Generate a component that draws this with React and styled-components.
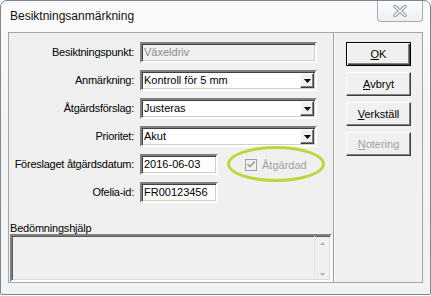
import React from "react";
import styled, { createGlobalStyle } from "styled-components";

const Global = createGlobalStyle`
  html, body {
    margin: 0;
    padding: 0;
    background: #ffffff;
  }
  body {
    font-family: "Liberation Sans", Arial, sans-serif;
    font-size: 11px;
    color: #000;
  }
`;

const Window = styled.div`
  box-sizing: border-box;
  width: 431px;
  height: 295px;
  border: 1px solid #7d8793;
  border-radius: 7px 7px 2px 2px;
  background: linear-gradient(#fbfbfb, #f3f4f5 40%, #f1f2f3);
  padding: 0 7px 0 7px;
  display: flex;
  flex-direction: column;
`;

const TitleBar = styled.div`
  height: 31px;
  display: flex;
  align-items: flex-start;
`;

const Title = styled.span`
  font-family: "Liberation Sans", Arial, sans-serif;
  font-size: 12px;
  line-height: 31px;
  padding-left: 2px;
  color: #111;
`;

const CloseButton = styled.div`
  margin-left: auto;
  box-sizing: border-box;
  width: 46px;
  height: 21px;
  border: 1px solid #a3acb6;
  border-top: none;
  border-radius: 0 0 4px 4px;
  background: linear-gradient(#fdfdfd, #eceef0);
  display: flex;
  align-items: center;
  justify-content: center;
`;

const Client = styled.div`
  box-sizing: border-box;
  height: 251px;
  display: flex;
  border: 1px solid #a6a6a6;
  background: #f0f0f0;
`;

const LeftPanel = styled.div`
  box-sizing: border-box;
  width: 325px;
  border-right: 1px solid #a0a0a0;
  box-shadow: 1px 0 0 #ffffff;
  display: flex;
  flex-direction: column;
  padding: 9px 0 0 1px;
`;

const Form = styled.div`
  display: grid;
  grid-template-columns: 124px 1fr;
  grid-auto-rows: 21px;
  column-gap: 6px;
  row-gap: 7px;
`;

const Label = styled.label`
  text-align: right;
  line-height: 21px;
  white-space: nowrap;
  letter-spacing: -0.25px;
`;

const Row = styled.div`
  display: flex;
  align-items: center;
`;

const Field = styled.div`
  box-sizing: border-box;
  width: ${(p) => p.$w}px;
  height: 21px;
  border-style: solid;
  border-width: 2px;
  border-color: #808080 #ffffff #ffffff #808080;
  box-shadow: inset 1px 1px 0 #404040, inset -1px -1px 0 #d4d0c8;
  background: ${(p) => (p.$disabled ? "#f0f0f0" : "#ffffff")};
  color: ${(p) => (p.$disabled ? "#8a8a8a" : "#000")};
  display: flex;
  align-items: center;
  padding-left: 2px;
  padding-right: 1px;
  white-space: nowrap;
`;

const FieldText = styled.span`
  flex: 1;
  line-height: 17px;
`;

const DropButton = styled.div`
  box-sizing: border-box;
  width: 14px;
  height: 15px;
  background: #f0f0f0;
  border-style: solid;
  border-width: 1px;
  border-color: #ffffff #404040 #404040 #ffffff;
  box-shadow: inset -1px -1px 0 #808080;
  display: flex;
  align-items: center;
  justify-content: center;
`;

const CheckWrap = styled.div`
  position: relative;
  display: flex;
  align-items: center;
  margin-left: 27px;
  color: #a0a0a0;
  gap: 5px;
`;

const CheckBox = styled.span`
  box-sizing: border-box;
  width: 12px;
  height: 12px;
  border: 1px solid #a0a0a0;
  background: #f0f0f0;
  display: flex;
  align-items: center;
  justify-content: center;
`;

const Highlight = styled.div`
  position: absolute;
  left: -18px;
  top: -13px;
  width: 98px;
  height: 36px;
  box-sizing: border-box;
  border: 3px solid #bcd63c;
  border-radius: 50%;
  pointer-events: none;
`;

const Bottom = styled.div`
  margin-top: auto;
  display: flex;
  flex-direction: column;
`;

const AreaLabel = styled.div`
  line-height: 12px;
  letter-spacing: -0.2px;
`;

const TextArea = styled.div`
  box-sizing: border-box;
  height: 48px;
  width: 322px;
  border-style: solid;
  border-width: 2px;
  border-color: #808080 #ffffff #ffffff #808080;
  box-shadow: inset 1px 1px 0 #5a5a5a, inset -1px -1px 0 #dcdcdc;
  background: #f0f0f0;
  display: flex;
  justify-content: flex-end;
`;

const ScrollBar = styled.div`
  width: 15px;
  border-left: 1px solid #e6e6e6;
  display: flex;
  flex-direction: column;
  justify-content: space-between;
  align-items: center;
  padding: 6px 0 4px;
`;

const RightPanel = styled.div`
  flex: 1;
  display: flex;
  flex-direction: column;
  gap: 6px;
  padding: 9px 0 0 12px;
`;

const Button = styled.div`
  box-sizing: border-box;
  width: 65px;
  height: 24px;
  background: #f0f0f0;
  border-style: solid;
  border-width: 1px;
  border-color: ${(p) => (p.$default ? "#000" : "#ffffff #404040 #404040 #ffffff")};
  box-shadow: ${(p) =>
    p.$default
      ? "inset 1px 1px 0 #ffffff, inset -1px -1px 0 #404040, inset -2px -2px 0 #808080"
      : "inset -1px -1px 0 #808080"};
  color: ${(p) => (p.$disabled ? "#a0a0a0" : "#000")};
  display: flex;
  align-items: center;
  justify-content: center;
  font-size: 11px;
`;

const Key = styled.span`
  text-decoration: underline;
`;

function Arrow() {
  return (
    <svg width="7" height="4" viewBox="0 0 7 4">
      <path d="M0 0h7L3.5 4z" fill="#000" />
    </svg>
  );
}

function Combo({ value }) {
  return (
    <Field $w={177}>
      <FieldText>{value}</FieldText>
      <DropButton>
        <Arrow />
      </DropButton>
    </Field>
  );
}

function Mnemonic({ k, rest }) {
  return (
    <span>
      <Key>{k}</Key>
      {rest}
    </span>
  );
}

export default function App() {
  return (
    <>
      <Global />
      <Window>
        <TitleBar>
          <Title>Besiktningsanmärkning</Title>
          <CloseButton>
            <svg width="14" height="12" viewBox="0 0 14 12">
              <path
                d="M2 1.5l10 9M12 1.5l-10 9"
                stroke="#8e969f"
                strokeWidth="3.4"
                strokeLinecap="round"
              />
              <path
                d="M2 1.5l10 9M12 1.5l-10 9"
                stroke="#ffffff"
                strokeWidth="1.4"
                strokeLinecap="round"
              />
            </svg>
          </CloseButton>
        </TitleBar>
        <Client>
          <LeftPanel>
            <Form>
              <Label>Besiktningspunkt:</Label>
              <Row>
                <Field $w={177} $disabled>
                  <FieldText>Växeldriv</FieldText>
                </Field>
              </Row>

              <Label>Anmärkning:</Label>
              <Row>
                <Combo value="Kontroll för 5 mm" />
              </Row>

              <Label>Åtgärdsförslag:</Label>
              <Row>
                <Combo value="Justeras" />
              </Row>

              <Label>Prioritet:</Label>
              <Row>
                <Combo value="Akut" />
              </Row>

              <Label>Föreslaget åtgärdsdatum:</Label>
              <Row>
                <Field $w={78}>
                  <FieldText>2016-06-03</FieldText>
                </Field>
                <CheckWrap>
                  <CheckBox>
                    <svg width="8" height="7" viewBox="0 0 8 7">
                      <path d="M0.5 3l2.5 2.5L7.5 0.5" stroke="#a0a0a0" strokeWidth="1.6" fill="none" />
                    </svg>
                  </CheckBox>
                  <span>Åtgärdad</span>
                  <Highlight />
                </CheckWrap>
              </Row>

              <Label>Ofelia-id:</Label>
              <Row>
                <Field $w={78}>
                  <FieldText>FR00123456</FieldText>
                </Field>
              </Row>
            </Form>

            <Bottom>
              <AreaLabel>Bedömningshjälp</AreaLabel>
              <TextArea>
                <ScrollBar>
                  <svg width="5" height="3" viewBox="0 0 5 3">
                    <path d="M0 3L2.5 0 5 3z" fill="#b0b0b0" />
                  </svg>
                  <svg width="5" height="3" viewBox="0 0 5 3">
                    <path d="M0 0h5L2.5 3z" fill="#b0b0b0" />
                  </svg>
                </ScrollBar>
              </TextArea>
            </Bottom>
          </LeftPanel>

          <RightPanel>
            <Button $default>
              <Mnemonic k="O" rest="K" />
            </Button>
            <Button>
              <Mnemonic k="A" rest="vbryt" />
            </Button>
            <Button>
              <Mnemonic k="V" rest="erkställ" />
            </Button>
            <Button $disabled>
              <Mnemonic k="N" rest="otering" />
            </Button>
          </RightPanel>
        </Client>
      </Window>
    </>
  );
}
